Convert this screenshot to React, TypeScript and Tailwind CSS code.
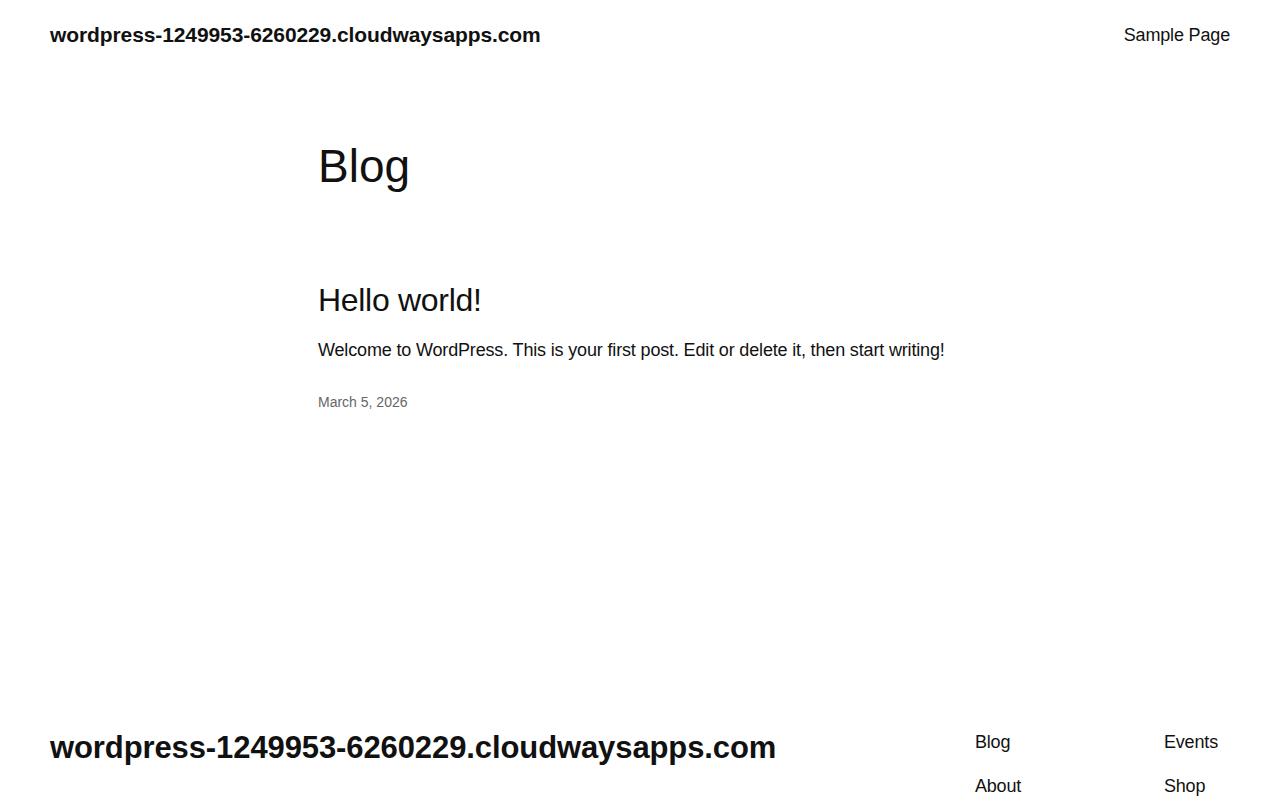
const SITE = "wordpress-1249953-6260229.cloudwaysapps.com";

export default function App() {
  return (
    <div className="bg-white text-[#111111] font-['Liberation_Sans',Arial,sans-serif]">
      {/* header */}
      <header className="flex items-center justify-between px-[50px] h-[69px]">
        <a className="text-[21px] font-bold tracking-[-0.1px]">{SITE}</a>
        <nav className="text-[18px] tracking-[-0.16px] pt-[2px]">
          <a>Sample Page</a>
        </nav>
      </header>

      {/* main */}
      <main className="w-[644px] h-[660px] mx-auto pt-[70px]">
        <h1 className="text-[46px] leading-[1.2]">Blog</h1>
        <article className="mt-[87px]">
          <h2 className="text-[32px] leading-[1.2] tracking-[-0.3px]">Hello world!</h2>
          <p className="mt-[17px] text-[18px] leading-[1.5] tracking-[-0.16px]">
            Welcome to WordPress. This is your first post. Edit or delete it, then start writing!
          </p>
          <p className="mt-[28px] text-[14px] text-[#666666]">March 5, 2026</p>
        </article>
      </main>

      {/* footer */}
      <footer className="flex justify-between px-[50px] pb-[40px]">
        <a className="text-[31px] font-bold leading-[1.2] tracking-[-0.1px]">{SITE}</a>
        <nav className="grid grid-cols-[189px_auto] gap-y-[17px] text-[18px] leading-[1.5] tracking-[-0.16px] pr-[12px]">
          <a>Blog</a>
          <a>Events</a>
          <a>About</a>
          <a>Shop</a>
        </nav>
      </footer>
    </div>
  );
}
